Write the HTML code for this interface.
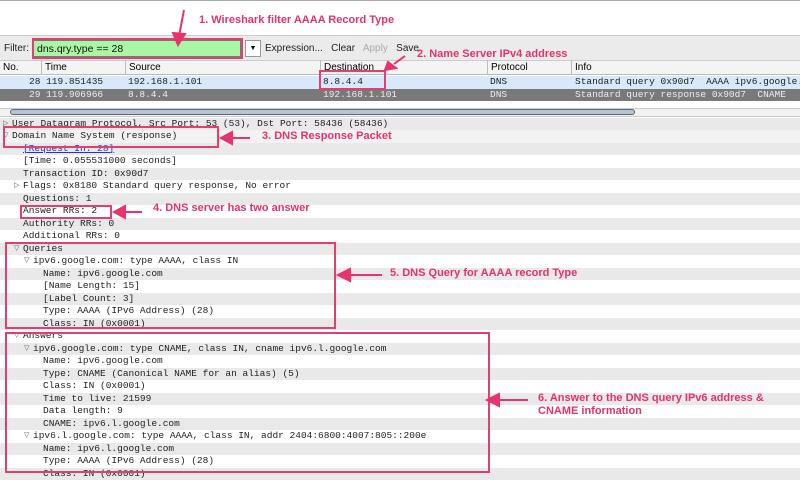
<!DOCTYPE html>
<html><head><style>
*{margin:0;padding:0;box-sizing:border-box}
body{width:800px;height:474px;overflow:hidden;background:#fff;position:relative;font-family:"Liberation Sans",sans-serif}
.a{position:absolute}
.m{font-family:"Liberation Mono",monospace;font-size:9.5px;white-space:pre}
.det{position:absolute;left:0;top:117.5px;width:800px;font-family:"Liberation Mono",monospace;font-size:9.5px;color:#222}
.det div{white-space:pre;height:12.5px;line-height:12.5px;position:relative}
.det div:nth-child(odd){background:#e9e9e9}
.l0{padding-left:12px}.l1{padding-left:23px}.l2{padding-left:33px}.l3{padding-left:43px}
.t{font-size:7px;color:#555;position:absolute;margin-left:-9px}
.ann{position:absolute;color:#e2336b;font-weight:bold;font-size:11px;white-space:nowrap}
.box{position:absolute;border:2px solid #e0406e}
.row{position:absolute;left:0;width:800px;height:12.5px;line-height:12.5px}
</style></head><body>
<div class="a" style="left:0;top:0;width:800px;height:1px;background:#aaa"></div>
<div class="a" style="left:0;top:35px;width:800px;height:1px;background:#ccc"></div>
<div class="a" style="left:0;top:36px;width:800px;height:24px;background:#ebebeb"></div>
<div class="a" style="left:4px;top:43px;font-size:10px;color:#222">Filter:</div>
<div class="a" style="left:33px;top:40px;width:208px;height:17px;background:#a9f6a4;border:1px solid #777"></div>
<div class="a" style="left:37px;top:43px;font-size:10.5px;color:#111">dns.qry.type == 28</div>
<div class="a" style="left:245px;top:40px;width:16px;height:17px;background:#fff;border:1px solid #999;font-size:7px;text-align:center;line-height:16px">▼</div>
<div class="a" style="left:265px;top:43px;font-size:10px;color:#222;white-space:nowrap">Expression...&nbsp;&nbsp; Clear&nbsp;&nbsp; <span style="color:#aaa">Apply</span>&nbsp;&nbsp; Save</div>
<div class="a" style="left:0;top:60px;width:800px;height:15px;background:#f4f4f4;border-top:1px solid #ccc;border-bottom:1px solid #bbb"></div>
<div class="a" style="left:3px;top:62px;font-size:10px">No.</div>
<div class="a" style="left:41px;top:60px;width:1px;height:15px;background:#bbb"></div>
<div class="a" style="left:45px;top:62px;font-size:10px">Time</div>
<div class="a" style="left:125px;top:60px;width:1px;height:15px;background:#bbb"></div>
<div class="a" style="left:129px;top:62px;font-size:10px">Source</div>
<div class="a" style="left:320px;top:60px;width:1px;height:15px;background:#bbb"></div>
<div class="a" style="left:324px;top:62px;font-size:10px">Destination</div>
<div class="a" style="left:487px;top:60px;width:1px;height:15px;background:#bbb"></div>
<div class="a" style="left:491px;top:62px;font-size:10px">Protocol</div>
<div class="a" style="left:571px;top:60px;width:1px;height:15px;background:#bbb"></div>
<div class="a" style="left:575px;top:62px;font-size:10px">Info</div>
<div class="row m" style="top:76px;background:#d9e9fb;color:#222"><span class="a" style="left:29px">28 119.851435</span><span class="a" style="left:128px">192.168.1.101</span><span class="a" style="left:323px">8.8.4.4</span><span class="a" style="left:490px">DNS</span><span class="a" style="left:575px">Standard query 0x90d7  AAAA ipv6.google.</span></div>
<div class="row m" style="top:88.5px;background:#797979;color:#eee"><span class="a" style="left:29px">29 119.906966</span><span class="a" style="left:128px">8.8.4.4</span><span class="a" style="left:323px">192.168.1.101</span><span class="a" style="left:490px">DNS</span><span class="a" style="left:575px">Standard query response 0x90d7  CNAME</span></div>
<div class="a" style="left:0;top:108px;width:800px;height:9px;background:#f2f2f2;border-top:1px solid #ccc;border-bottom:1px solid #ccc"></div>
<div class="a" style="left:10px;top:109px;width:625px;height:6px;background:#b8c4d0;border:1px solid #5a6a7a;border-radius:3px"></div>
<div class="det">
<div class="l0"><span class="t">▷</span>User Datagram Protocol, Src Port: 53 (53), Dst Port: 58436 (58436)</div>
<div class="l0" style="background:#f2f2f2"><span class="t">▽</span>Domain Name System (response)</div>
<div class="l1"><span style="color:#2233cc;text-decoration:underline">[Request In: 28]</span></div>
<div class="l1">[Time: 0.055531000 seconds]</div>
<div class="l1">Transaction ID: 0x90d7</div>
<div class="l1"><span class="t">▷</span>Flags: 0x8180 Standard query response, No error</div>
<div class="l1">Questions: 1</div>
<div class="l1">Answer RRs: 2</div>
<div class="l1">Authority RRs: 0</div>
<div class="l1">Additional RRs: 0</div>
<div class="l1"><span class="t">▽</span>Queries</div>
<div class="l2"><span class="t">▽</span>ipv6.google.com: type AAAA, class IN</div>
<div class="l3">Name: ipv6.google.com</div>
<div class="l3">[Name Length: 15]</div>
<div class="l3">[Label Count: 3]</div>
<div class="l3">Type: AAAA (IPv6 Address) (28)</div>
<div class="l3">Class: IN (0x0001)</div>
<div class="l1"><span class="t">▽</span>Answers</div>
<div class="l2"><span class="t">▽</span>ipv6.google.com: type CNAME, class IN, cname ipv6.l.google.com</div>
<div class="l3">Name: ipv6.google.com</div>
<div class="l3">Type: CNAME (Canonical NAME for an alias) (5)</div>
<div class="l3">Class: IN (0x0001)</div>
<div class="l3">Time to live: 21599</div>
<div class="l3">Data length: 9</div>
<div class="l3">CNAME: ipv6.l.google.com</div>
<div class="l2"><span class="t">▽</span>ipv6.l.google.com: type AAAA, class IN, addr 2404:6800:4007:805::200e</div>
<div class="l3">Name: ipv6.l.google.com</div>
<div class="l3">Type: AAAA (IPv6 Address) (28)</div>
<div class="l3">Class: IN (0x0001)</div>
</div>
<div class="box" style="left:32px;top:38px;width:211px;height:21px"></div>
<div class="box" style="left:319px;top:70px;width:67px;height:20px"></div>
<div class="box" style="left:3px;top:126px;width:216px;height:22px"></div>
<div class="box" style="left:20px;top:205px;width:92px;height:14px"></div>
<div class="box" style="left:5px;top:242px;width:331px;height:87px"></div>
<div class="box" style="left:5px;top:332px;width:485px;height:141px"></div>
<svg class="a" style="left:0;top:0" width="800" height="474">
<g stroke="#e8336d" stroke-width="2" fill="#e8336d">
<line x1="184" y1="10" x2="179" y2="36"/><polygon points="173,33 185,34 178,45"/>
<line x1="405" y1="56" x2="394" y2="64"/><polygon points="388,62 396,68 385,70"/>
<line x1="250" y1="138" x2="230" y2="138"/><polygon points="232,132 232,144 221,138"/>
<line x1="142" y1="212" x2="124" y2="212"/><polygon points="125,206 125,218 114,212"/>
<line x1="382" y1="275" x2="348" y2="275"/><polygon points="350,269 350,281 338,275"/>
<line x1="528" y1="400" x2="497" y2="400"/><polygon points="499,394 499,406 487,400"/>
</g></svg>
<div class="ann" style="left:199px;top:14px">1. Wireshark filter AAAA Record Type</div>
<div class="ann" style="left:417px;top:48px">2. Name Server IPv4 address</div>
<div class="ann" style="left:262px;top:130px">3. DNS Response Packet</div>
<div class="ann" style="left:153px;top:202px">4. DNS server has two answer</div>
<div class="ann" style="left:390px;top:267px">5. DNS Query for AAAA record Type</div>
<div class="ann" style="left:538px;top:392px;line-height:13px">6. Answer to the DNS query IPv6 address &amp;<br>CNAME information</div>
</body></html>
